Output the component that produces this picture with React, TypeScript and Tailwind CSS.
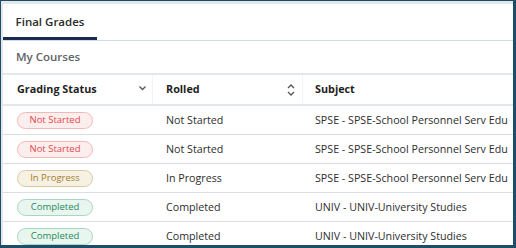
import React from 'react';

type Status = 'Not Started' | 'In Progress' | 'Completed';

interface Course {
    status: Status;
    rolled: string;
    subject: string;
}

const courses: Course[] = [
    { status: 'Not Started', rolled: 'Not Started', subject: 'SPSE - SPSE-School Personnel Serv Edu' },
    { status: 'Not Started', rolled: 'Not Started', subject: 'SPSE - SPSE-School Personnel Serv Edu' },
    { status: 'In Progress', rolled: 'In Progress', subject: 'SPSE - SPSE-School Personnel Serv Edu' },
    { status: 'Completed', rolled: 'Completed', subject: 'UNIV - UNIV-University Studies' },
    { status: 'Completed', rolled: 'Completed', subject: 'UNIV - UNIV-University Studies' },
];

const badgeStyles: Record<Status, string> = {
    'Not Started': 'bg-[#fdeeee] border-[#f3b9b9] text-[#e2464b]',
    'In Progress': 'bg-[#f6f1e3] border-[#d9c9a2] text-[#a07f2c]',
    'Completed': 'bg-[#e9f6f0] border-[#a9d6c1] text-[#1e8a5c]',
};

const StatusBadge: React.FC<{ status: Status }> = ({ status }) => (
    <span
        className={`inline-flex items-center justify-center w-[76px] h-[17px] rounded-full border text-[9.5px] leading-none ${badgeStyles[status]}`}
    >
        {status}
    </span>
);

const App: React.FC = () => {
    return (
        <div
            className="w-[516px] h-[248px] overflow-hidden bg-white border-l border-t border-r-[3px] border-b-[3px] border-[#1d4e69]"
            style={{ fontFamily: '"Open Sans", "Liberation Sans", sans-serif' }}
        >
            <div className="h-full border-l-2 border-t-[3px] border-[#e3e7ea] flex flex-col">
                {/* Tabs */}
                <div className="flex h-[37px] shrink-0 border-b border-[#d5dce1]">
                    <div className="w-[94px] flex items-center justify-center pt-[2px] border-b-[3px] border-[#1b2a55] text-[11.5px] font-semibold text-[#2b2b2b]">
                        Final Grades
                    </div>
                </div>

                {/* Section title */}
                <div className="h-[34px] shrink-0 flex items-center pl-[13px] text-[11.5px] font-semibold text-[#606468] border-b-2 border-[#e3e7ea]">
                    My Courses
                </div>

                {/* Table header */}
                <div className="grid grid-cols-[150px_150px_1fr] h-[31px] shrink-0 border-b-2 border-[#e3e7ea] text-[10.8px] font-bold text-[#1f1f1f]">
                    <div className="flex items-center pl-[14px] pr-[5px] border-r border-[#f1f3f4]">
                        <span className="flex-1">Grading Status</span>
                        <svg width="9" height="6" viewBox="0 0 9 6" className="mb-[4px]">
                            <path d="M1.5 1.5 L4.5 4.5 L7.5 1.5" fill="none" stroke="#555" strokeWidth="1.3" />
                        </svg>
                    </div>
                    <div className="flex items-center pl-[13px] pr-[6px] border-r border-[#f1f3f4]">
                        <span className="flex-1">Rolled</span>
                        <svg width="10" height="14" viewBox="0 0 10 14">
                            <path d="M2 5 L5 2 L8 5" fill="none" stroke="#555" strokeWidth="1.3" />
                            <path d="M2 9 L5 12 L8 9" fill="none" stroke="#555" strokeWidth="1.3" />
                        </svg>
                    </div>
                    <div className="flex items-center pl-[12px]">Subject</div>
                </div>

                {/* Rows */}
                {courses.map((course, i) => (
                    <div
                        key={i}
                        className="grid grid-cols-[150px_150px_1fr] h-[29px] shrink-0 border-b border-[#d9dfe4] text-[10.7px] text-[#2e2e2e]"
                    >
                        <div className="flex items-center pl-[14px]">
                            <StatusBadge status={course.status} />
                        </div>
                        <div className="flex items-center pl-[13px]">{course.rolled}</div>
                        <div className="flex items-center pl-[12px] whitespace-nowrap">{course.subject}</div>
                    </div>
                ))}
            </div>
        </div>
    );
};

export default App;
